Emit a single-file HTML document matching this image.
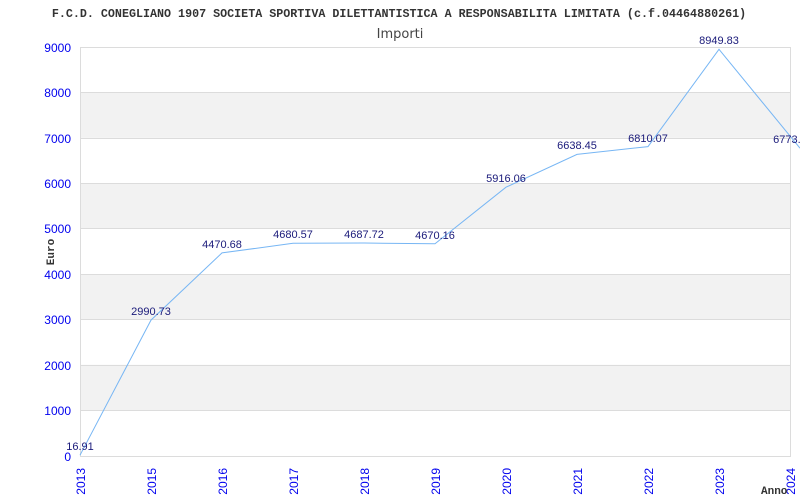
<!DOCTYPE html>
<html><head><style>body{margin:0;background:#fff}svg{display:block}</style></head><body>
<svg width="800" height="500" xmlns="http://www.w3.org/2000/svg">
<rect width="800" height="500" fill="#fff"/>
<text x="399" y="17" text-anchor="middle" font-family="Liberation Mono, monospace" font-weight="bold" font-size="11.7" fill="#333">F.C.D. CONEGLIANO 1907 SOCIETA SPORTIVA DILETTANTISTICA A RESPONSABILITA LIMITATA (c.f.04464880261)</text>
<text x="400" y="38" text-anchor="middle" font-family="DejaVu Sans, sans-serif" font-size="13" fill="#444">Importi</text>
<g fill="#f2f2f2">
<rect x="80" y="92.4" width="710" height="45.4"/>
<rect x="80" y="183.2" width="710" height="45.4"/>
<rect x="80" y="274" width="710" height="45.4"/>
<rect x="80" y="364.8" width="710" height="45.4"/>
</g>
<g stroke="#dcdcdc" stroke-width="1">
<line x1="80" x2="790" y1="47.5" y2="47.5"/><line x1="80" x2="790" y1="92.5" y2="92.5"/>
<line x1="80" x2="790" y1="138.5" y2="138.5"/><line x1="80" x2="790" y1="183.5" y2="183.5"/>
<line x1="80" x2="790" y1="228.5" y2="228.5"/><line x1="80" x2="790" y1="274.5" y2="274.5"/>
<line x1="80" x2="790" y1="319.5" y2="319.5"/><line x1="80" x2="790" y1="365.5" y2="365.5"/>
<line x1="80" x2="790" y1="410.5" y2="410.5"/><line x1="80" x2="790" y1="456.5" y2="456.5"/>
<line x1="80.5" x2="80.5" y1="47" y2="457"/><line x1="790.5" x2="790.5" y1="47" y2="457"/>
</g>
<g font-family="Liberation Sans, sans-serif" font-size="12" fill="#0000ee" text-anchor="end">
<text x="71" y="52">9000</text><text x="71" y="97">8000</text><text x="71" y="143">7000</text>
<text x="71" y="188">6000</text><text x="71" y="233">5000</text><text x="71" y="279">4000</text>
<text x="71" y="324">3000</text><text x="71" y="370">2000</text><text x="71" y="415">1000</text>
<text x="71" y="461">0</text>
</g>
<g font-family="Liberation Sans, sans-serif" font-size="12" fill="#0000ee" text-anchor="end">
<text transform="translate(85,468) rotate(-90)">2013</text>
<text transform="translate(156,468) rotate(-90)">2015</text>
<text transform="translate(227,468) rotate(-90)">2016</text>
<text transform="translate(298,468) rotate(-90)">2017</text>
<text transform="translate(369,468) rotate(-90)">2018</text>
<text transform="translate(440,468) rotate(-90)">2019</text>
<text transform="translate(511,468) rotate(-90)">2020</text>
<text transform="translate(582,468) rotate(-90)">2021</text>
<text transform="translate(653,468) rotate(-90)">2022</text>
<text transform="translate(724,468) rotate(-90)">2023</text>
<text transform="translate(795,468) rotate(-90)">2024</text>
</g>
<text transform="translate(54,252) rotate(-90)" text-anchor="middle" font-family="Liberation Mono, monospace" font-weight="bold" font-size="11" fill="#333">Euro</text>
<text x="761" y="494" font-family="Liberation Mono, monospace" font-weight="bold" font-size="11" fill="#333">Anno</text>
<polyline fill="none" stroke="#77b6f4" stroke-width="1" points="80,455.2 151,320.1 222,252.9 293,243.3 364,243 435,243.8 506,187.2 577,154.4 648,146.6 719,49.3 800,148.2"/>
<g font-family="Liberation Sans, sans-serif" font-size="11" fill="#1a1a7a" text-anchor="middle">
<text x="80" y="450">16.91</text>
<text x="151" y="315">2990.73</text>
<text x="222" y="248">4470.68</text>
<text x="293" y="238">4680.57</text>
<text x="364" y="238">4687.72</text>
<text x="435" y="239">4670.16</text>
<text x="506" y="182">5916.06</text>
<text x="577" y="149">6638.45</text>
<text x="648" y="142">6810.07</text>
<text x="719" y="44">8949.83</text>
<text x="790" y="143">6773.2</text>
</g>
</svg>
</body></html>
